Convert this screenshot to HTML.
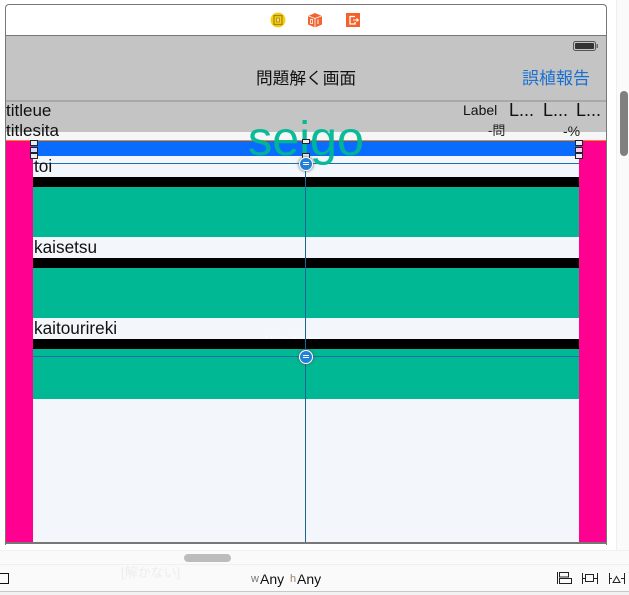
<!DOCTYPE html>
<html><head><meta charset="utf-8">
<style>
html,body{margin:0;padding:0}
body{width:629px;height:595px;background:#fff;position:relative;overflow:hidden;font-family:"Liberation Sans","Noto Sans CJK JP",sans-serif;color:#111}
.a{position:absolute}
.t{position:absolute;white-space:nowrap;line-height:18px}
.h{position:absolute;width:6px;height:6px;border:1px solid #222;background:#e8ecfa}
.eq{position:absolute;width:12px;height:12px;border-radius:50%;background:#2180d8;border:1px solid #fff;box-shadow:0 0 3px #555}
.eq:after{content:"";position:absolute;left:3px;top:4px;width:6px;height:1px;border-top:1px solid #fff;border-bottom:1px solid #fff}
</style></head>
<body>
<!-- frame -->
<div class="a" style="left:5px;top:4px;width:600px;height:540px;border:1px solid #777;border-bottom:none;border-radius:4px 4px 0 0;box-sizing:content-box"></div>
<div class="a" style="left:6px;top:35px;width:600px;height:1px;background:#777"></div>
<div class="a" style="left:5px;top:35px;width:1px;height:510px;background:#777"></div>
<div class="a" style="left:606px;top:35px;width:1px;height:510px;background:#777"></div>

<!-- dock icons -->
<svg class="a" style="left:270px;top:12px" width="16" height="16" viewBox="0 0 16 16"><circle cx="8" cy="8" r="7.500" fill="#fbcf0c"/><rect x="4" y="3.500" width="8" height="9" fill="none" stroke="#a08a20" stroke-width="1.300"/><rect x="6.500" y="6" width="3" height="4" fill="#f4e070" stroke="#a08a20" stroke-width=".8"/></svg>
<svg class="a" style="left:307px;top:12px" width="16" height="16" viewBox="0 0 16 16"><path d="M1 4 8 1l7 3v8.500L8 15.500 1 12.500z" fill="#f26530"/><path d="M1.500 4 8 6.500 14.500 4M8 6.500v9" stroke="#fff" stroke-width=".8" fill="none"/><rect x="3.500" y="7.500" width="2" height="4" fill="none" stroke="#fff" stroke-width=".8"/><path d="M11 7.500v4.500" stroke="#fff" stroke-width="1"/></svg>
<svg class="a" style="left:346px;top:13px" width="14" height="14" viewBox="0 0 14 14"><rect width="14" height="14" fill="#f4622a"/><path d="M9 3.500H4v7.500h5V9" fill="none" stroke="#fff" stroke-width="1.300"/><path d="M7 7h5M10.500 5.500 12.300 7l-1.800 1.500" fill="none" stroke="#fff" stroke-width="1.100"/></svg>

<!-- nav bar -->
<div class="a" style="left:6px;top:36px;width:600px;height:96px;background:#c4c4c4"></div>
<div class="a" style="left:6px;top:100px;width:600px;height:1.500px;background:#a8a8a8"></div>
<svg class="a" style="left:573px;top:41px" width="26" height="11" viewBox="0 0 26 11"><rect x=".5" y=".5" width="22" height="9" rx="2" fill="none" stroke="#555"/><rect x="2" y="2" width="19" height="6" rx="1" fill="#333"/><rect x="23.500" y="3" width="1.500" height="4" fill="#666"/></svg>
<div class="t" style="left:256px;top:70px;font-size:16.700px;color:#111">問題解く画面</div>
<div class="t" style="left:522px;top:70px;font-size:17px;color:#1a6fcf">誤植報告</div>

<!-- content -->
<div class="a" style="left:6px;top:132px;width:600px;height:8px;background:#f6f6f6"></div>
<div class="a" style="left:6px;top:140px;width:600px;height:403px;background:#f3f6fb"></div>
<div class="a" style="left:6px;top:141px;width:27px;height:401px;background:#ff0090"></div>
<div class="a" style="left:579px;top:141px;width:27px;height:401px;background:#ff0090"></div>
<div class="a" style="left:33px;top:141px;width:546px;height:15px;background:#0a6cff"></div>
<div class="a" style="left:6px;top:140px;width:600px;height:1px;background:#f08a10"></div>
<div class="a" style="left:33px;top:163px;width:546px;height:1px;background:#1f6fb0"></div>

<!-- title labels -->
<div class="t" style="left:6px;top:102px;font-size:17px">titleue</div>
<div class="t" style="left:6px;top:122px;font-size:17px">titlesita</div>
<div class="t" style="left:463px;top:101px;font-size:14px">Label</div>
<div class="t" style="left:509px;top:101px;font-size:18px">L...</div>
<div class="t" style="left:543px;top:101px;font-size:18px">L...</div>
<div class="t" style="left:576px;top:101px;font-size:18px">L...</div>
<div class="t" style="left:488px;top:122px;font-size:13px;color:#222">-問</div>
<div class="t" style="left:563px;top:122px;font-size:14px;color:#222">-%</div>

<div class="t" style="left:34px;top:157px;font-size:17.200px">toi</div>
<div class="a" style="left:33px;top:177px;width:546px;height:10px;background:#000"></div>
<div class="a" style="left:33px;top:187px;width:546px;height:50px;background:#00b894"></div>
<div class="t" style="left:34px;top:238px;font-size:17.200px">kaisetsu</div>
<div class="a" style="left:33px;top:258px;width:546px;height:10px;background:#000"></div>
<div class="a" style="left:33px;top:268px;width:546px;height:50px;background:#00b894"></div>
<div class="t" style="left:34px;top:319px;font-size:17.200px">kaitourireki</div>
<div class="t" style="left:265px;top:331px;font-size:11px;color:#fbfcfe">UISwitView</div>
<div class="a" style="left:33px;top:339px;width:546px;height:10px;background:#000"></div>
<div class="a" style="left:33px;top:349px;width:546px;height:50px;background:#00b894"></div>
<div class="a" style="left:33px;top:356px;width:546px;height:1px;background:#1f6fb0"></div>

<!-- center guide -->
<div class="a" style="left:305px;top:156px;width:1px;height:387px;background:#1a6595"></div>

<!-- seigo -->
<div class="t" style="left:248px;top:114px;font-size:48.500px;line-height:50px;color:#00b894;opacity:.95">seigo</div>

<!-- handles -->
<div class="h" style="left:30px;top:140px;height:4px"></div>
<div class="h" style="left:30px;top:147px;height:4px;background:#cfdcfb"></div>
<div class="h" style="left:30px;top:153px;height:4px"></div>
<div class="h" style="left:575px;top:140px;height:4px"></div>
<div class="h" style="left:575px;top:147px;height:4px;background:#f6d0ea"></div>
<div class="h" style="left:575px;top:153px;height:4px"></div>
<div class="h" style="left:302px;top:139px;height:3px"></div>
<div class="h" style="left:302px;top:153px;height:4px"></div>
<div class="eq" style="left:298.500px;top:157px"></div>
<div class="eq" style="left:298.500px;top:350px"></div>

<!-- bottom -->
<div class="a" style="left:6px;top:542px;width:600px;height:2px;background:#777"></div>
<div class="a" style="left:0;top:550px;width:629px;height:45px;background:#fafafa"></div>
<div class="a" style="left:0;top:564px;width:629px;height:1px;background:#f0f0f0"></div>
<div class="a" style="left:0;top:550px;width:629px;height:1px;background:#f0f0f0"></div>
<div class="a" style="left:184px;top:554px;width:47px;height:8px;border-radius:4px;background:#bcbcbc"></div>
<div class="t" style="left:121px;top:564px;font-size:13px;color:#ededed">[解かない]</div>
<div class="a" style="left:-4px;top:573px;width:11px;height:9px;border:1px solid #111"></div>
<div class="t" style="left:251px;top:570px;font-size:11px;color:#777">w</div>
<div class="t" style="left:260px;top:570px;font-size:14px;color:#111">Any</div>
<div class="t" style="left:290px;top:570px;font-size:11px;color:#a08060">h</div>
<div class="t" style="left:297px;top:570px;font-size:14px;color:#111">Any</div>
<div class="a" style="left:0;top:591px;width:629px;height:1px;background:#c8c8c8"></div>
<div class="a" style="left:0;top:592px;width:629px;height:3px;background:#f2f2f2"></div>
<svg class="a" style="left:557px;top:572px" width="70" height="13" viewBox="0 0 70 13" fill="none" stroke="#222" stroke-width="1"><path d="M.5 0v12"/><rect x="2.500" y=".5" width="9" height="4.500"/><rect x="2.500" y="6.500" width="12" height="5"/><path d="M25.500 1v11M40.500 1v11M26 6.500h2"/><rect x="28.500" y="2.500" width="8" height="7"/><path d="M37 6.500h3M52.500 1v11M67.500 1v11M53 6.500h2M64 6.500h3M56 10.500l3.500-6 3.500 6z"/></svg>

<!-- right scrollbar -->
<div class="a" style="left:616px;top:0;width:13px;height:550px;background:#fafafa;border-left:1px solid #efefef;box-sizing:border-box"></div>
<div class="a" style="left:620px;top:91px;width:8px;height:65px;border-radius:4px;background:#808080"></div>
</body></html>
